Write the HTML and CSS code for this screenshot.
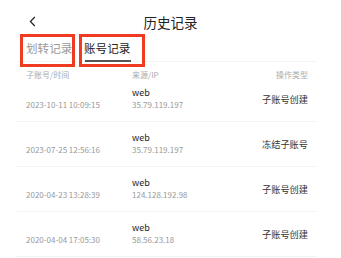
FILE: index.html
```html
<!DOCTYPE html>
<html>
<head>
    <title>历史记录</title>
    <link rel="stylesheet" href="styles.css">
</head>
<body>
    <div class="page">
        <div class="topbar">
            <svg class="back" width="7" height="11" viewBox="0 0 7 11"><path d="M5.8 1 L1.4 5.5 L5.8 10" fill="none" stroke="#222" stroke-width="1.2"/></svg>
            <h1>历史记录</h1>
        </div>
        <div class="tabs">
            <div class="tab mark">划转记录</div>
            <div class="tab mark active"><span>账号记录</span></div>
        </div>
        <div class="list">
            <div class="row head">
                <div class="col-a">子账号/时间</div>
                <div class="col-b">来源/IP</div>
                <div class="col-c">操作类型</div>
            </div>
            <div class="row item">
                <div class="col-a date">2023-10-11 10:09:15</div>
                <div class="col-b"><div class="src">web</div><div class="ip">35.79.119.197</div></div>
                <div class="col-c op">子账号创建</div>
            </div>
            <div class="row item">
                <div class="col-a date">2023-07-25 12:56:16</div>
                <div class="col-b"><div class="src">web</div><div class="ip">35.79.119.197</div></div>
                <div class="col-c op">冻结子账号</div>
            </div>
            <div class="row item">
                <div class="col-a date">2020-04-23 13:28:39</div>
                <div class="col-b"><div class="src">web</div><div class="ip">124.128.192.98</div></div>
                <div class="col-c op">子账号创建</div>
            </div>
            <div class="row item">
                <div class="col-a date">2020-04-04 17:05:30</div>
                <div class="col-b"><div class="src">web</div><div class="ip">58.56.23.18</div></div>
                <div class="col-c op">子账号创建</div>
            </div>
        </div>
    </div>
</body>
</html>
```
FILE: styles.css
```css
* { box-sizing: border-box; }
body { margin: 0; background: #fff; font-family: "Noto Sans CJK SC", "Noto Sans", sans-serif; color: #333; }
.page { width: 341px; height: 258px; overflow: hidden; }
.topbar { height: 34px; position: relative; display: flex; justify-content: center; padding-top: 14px; }
.topbar h1 { margin: 0; font-size: 13.5px; line-height: 16px; font-weight: 400; color: #222; }
.back { position: absolute; left: 29px; top: 16px; display: block; }
.tabs { margin: 0 24px 0 17px; height: 28px; border-bottom: 1px solid #f3f3f3; display: flex; align-items: flex-start; }
.tab { font-size: 11.6px; line-height: 22px; height: 33px; padding-bottom: 5px; color: #999; white-space: nowrap; }
.mark { border: 3px solid #ee3b22; }
.tab:first-child { margin-left: 3px; padding-left: 3px; width: 55px; }
.tab.active { margin-left: 4px; padding-left: 2px; width: 66px; color: #222; }
.tab.active span { display: inline-block; position: relative; height: 22px; }
.tab.active span::after { content: ""; position: absolute; left: 1px; right: -1px; top: 23px; height: 2px; background: #555; }
.list { margin: 0 24px 0 17px; }
.row { display: flex; align-items: center; padding: 0 9px; }
.row.head { height: 15px; padding-top: 8px; font-size: 8px; line-height: 10px; color: #aaa; align-items: flex-start; }
.row.item { height: 45px; border-bottom: 1px solid #f3f3f3; }
.col-a { width: 106px; }
.col-b { flex: 1; }
.col-c { text-align: right; }
.date { font-size: 8px; line-height: 12px; color: #999; padding-top: 12px; }
.src { font-size: 9px; color: #222; line-height: 12px; }
.ip { font-size: 8px; color: #999; line-height: 12px; }
.op { font-size: 9.2px; line-height: 12px; color: #333; }
```
